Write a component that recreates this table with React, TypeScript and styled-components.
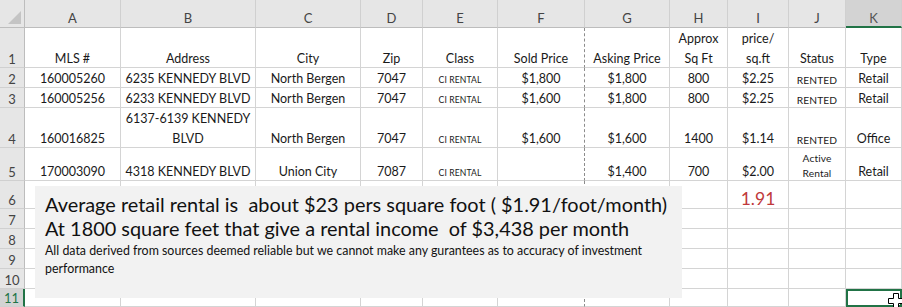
import React from 'react'
import styled, { createGlobalStyle, css } from 'styled-components'

const GlobalStyle = createGlobalStyle`
  html, body {
    margin: 0;
    padding: 0;
    background: #ffffff;
  }
  body {
    font-family: Lato, 'Open Sans', sans-serif;
    color: #1a1a1a;
  }
`

// row header + A..J, K takes the rest
const COLS = [25, 96, 135, 105, 62, 75, 87, 85, 58, 61, 57]
// column header + rows 1..10, row 11 takes the rest
const ROWS = [28, 40, 20, 20, 40, 33, 28, 20, 20, 20, 20]
const LETTERS = ['A', 'B', 'C', 'D', 'E', 'F', 'G', 'H', 'I', 'J', 'K']

const Sheet = styled.div`
  position: relative;
  width: 902px;
  height: 307px;
  overflow: hidden;
  display: grid;
  grid-template-columns: ${COLS.map((c) => c + 'px').join(' ')} 1fr;
  grid-template-rows: ${ROWS.map((r) => r + 'px').join(' ')} 1fr;
`

const Corner = styled.div`
  position: relative;
  background: #e6e6e6;
  border-right: 1px solid #bdbdbd;
  border-bottom: 1px solid #bdbdbd;
  box-sizing: border-box;

  &::after {
    content: '';
    position: absolute;
    right: 3px;
    bottom: 3px;
    border-style: solid;
    border-width: 0 0 13px 13px;
    border-color: transparent transparent #c4c4c4 transparent;
  }
`

const ColHead = styled.div<{ $active?: boolean }>`
  display: flex;
  align-items: center;
  justify-content: center;
  padding-top: 9px;
  box-sizing: border-box;
  font-size: 13px;
  color: #444;
  background: #e6e6e6;
  border-right: 1px solid #d0d0d0;
  border-bottom: 1px solid #bdbdbd;
  ${(p) =>
    p.$active &&
    css`
      background: #d3d3d3;
      color: #555;
      border-bottom: 2px solid #217346;
    `}
`

const RowHead = styled.div<{ $active?: boolean }>`
  display: flex;
  align-items: flex-end;
  justify-content: center;
  padding-bottom: 1px;
  box-sizing: border-box;
  font-size: 13px;
  line-height: 14px;
  color: #444;
  background: #e6e6e6;
  border-right: 1px solid #bdbdbd;
  border-bottom: 1px solid #d0d0d0;
  ${(p) =>
    p.$active &&
    css`
      background: #d3d3d3;
      color: #217346;
      border-right: 2px solid #217346;
    `}
`

const Cell = styled.div<{ $dashed?: boolean; $selected?: boolean }>`
  display: flex;
  flex-direction: column;
  align-items: center;
  justify-content: flex-end;
  padding-bottom: 1px;
  box-sizing: border-box;
  text-align: center;
  font-size: 12.5px;
  line-height: 14px;
  white-space: nowrap;
  border-right: 1px ${(p) => (p.$dashed ? 'dashed #8c8c8c' : 'solid #d4d4d4')};
  border-bottom: 1px solid #d4d4d4;
  ${(p) =>
    p.$selected &&
    css`
      border: 2px solid #217346;
    `}
`

// wrapped text inside a cell, lines spaced like Excel's
const Lines = styled.span<{ $gap: number }>`
  display: flex;
  flex-direction: column;
  align-items: center;
  gap: ${(p) => p.$gap}px;
`

const Small = styled.span<{ $size: number }>`
  font-size: ${(p) => p.$size}px;
  line-height: 12px;
  letter-spacing: 0.1px;
`

const Red = styled.span`
  font-size: 17.5px;
  line-height: 16px;
  color: #c0393b;
`

const TextBox = styled.div`
  position: absolute;
  left: 35px;
  top: 186px;
  width: 647px;
  height: 112px;
  background: #f2f2f2;
  box-sizing: border-box;
  padding: 6px 0 0 10px;
`

const BigLine = styled.div`
  font-size: 19.9px;
  line-height: 24px;
  white-space: pre;
  color: #111;
`

const Fine = styled.div`
  margin-top: 2px;
  font-size: 12.4px;
  line-height: 18px;
  color: #111;
`

const Cursor = styled.svg`
  position: absolute;
  left: 888px;
  top: 293px;
`

type Val = React.ReactNode

const ci = <Small $size={8.6}>CI RENTAL</Small>
const rented = <Small $size={10.2}>RENTED</Small>
const blank: Val[] = ['', '', '', '', '', '', '', '', '', '', '']

const data: Val[][] = [
  [
    'MLS #',
    'Address',
    'City',
    'Zip',
    'Class',
    'Sold Price',
    'Asking Price',
    <Lines $gap={6}>
      <span>Approx</span>
      <span>Sq Ft</span>
    </Lines>,
    <Lines $gap={6}>
      <span>price/</span>
      <span>sq.ft</span>
    </Lines>,
    'Status',
    'Type',
  ],
  ['160005260', '6235 KENNEDY BLVD', 'North Bergen', '7047', ci, '$1,800', '$1,800', '800', '$2.25', rented, 'Retail'],
  ['160005256', '6233 KENNEDY BLVD', 'North Bergen', '7047', ci, '$1,600', '$1,800', '800', '$2.25', rented, 'Retail'],
  [
    '160016825',
    <Lines $gap={6}>
      <span>6137-6139 KENNEDY</span>
      <span>BLVD</span>
    </Lines>,
    'North Bergen',
    '7047',
    ci,
    '$1,600',
    '$1,600',
    '1400',
    '$1.14',
    rented,
    'Office',
  ],
  [
    '170003090',
    '4318 KENNEDY BLVD',
    'Union City',
    '7087',
    ci,
    '',
    '$1,400',
    '700',
    '$2.00',
    <Lines $gap={3}>
      <Small $size={10.2}>Active</Small>
      <Small $size={10.2}>Rental</Small>
    </Lines>,
    'Retail',
  ],
  ['', '', '', '', '', '', '', '', <Red>1.91</Red>, '', ''],
  blank,
  blank,
  blank,
  blank,
  blank,
]

const App = () => {
  return (
    <>
      <GlobalStyle />
      <Sheet>
        <Corner />
        {LETTERS.map((l) => (
          <ColHead key={l} $active={l === 'K'}>
            {l}
          </ColHead>
        ))}
        {data.map((row, r) => (
          <React.Fragment key={r}>
            <RowHead $active={r === 10}>{r + 1}</RowHead>
            {row.map((v, c) => (
              <Cell key={c} $dashed={c === 5} $selected={r === 10 && c === 10}>
                {v}
              </Cell>
            ))}
          </React.Fragment>
        ))}
        <TextBox>
          <BigLine>Average retail rental is  about $23 pers square foot ( $1.91/foot/month)</BigLine>
          <BigLine>At 1800 square feet that give a rental income  of $3,438 per month</BigLine>
          <Fine>
            All data derived from sources deemed reliable but we cannot make any gurantees as to accuracy of investment
            <br />
            performance
          </Fine>
        </TextBox>
        <Cursor width="16" height="16" viewBox="0 0 16 16">
          <path d="M5.5 0.5h5v5h5v5h-5v5h-5v-5h-5v-5h5z" fill="#ffffff" stroke="#000000" strokeWidth="1" />
        </Cursor>
      </Sheet>
    </>
  )
}

export default App
